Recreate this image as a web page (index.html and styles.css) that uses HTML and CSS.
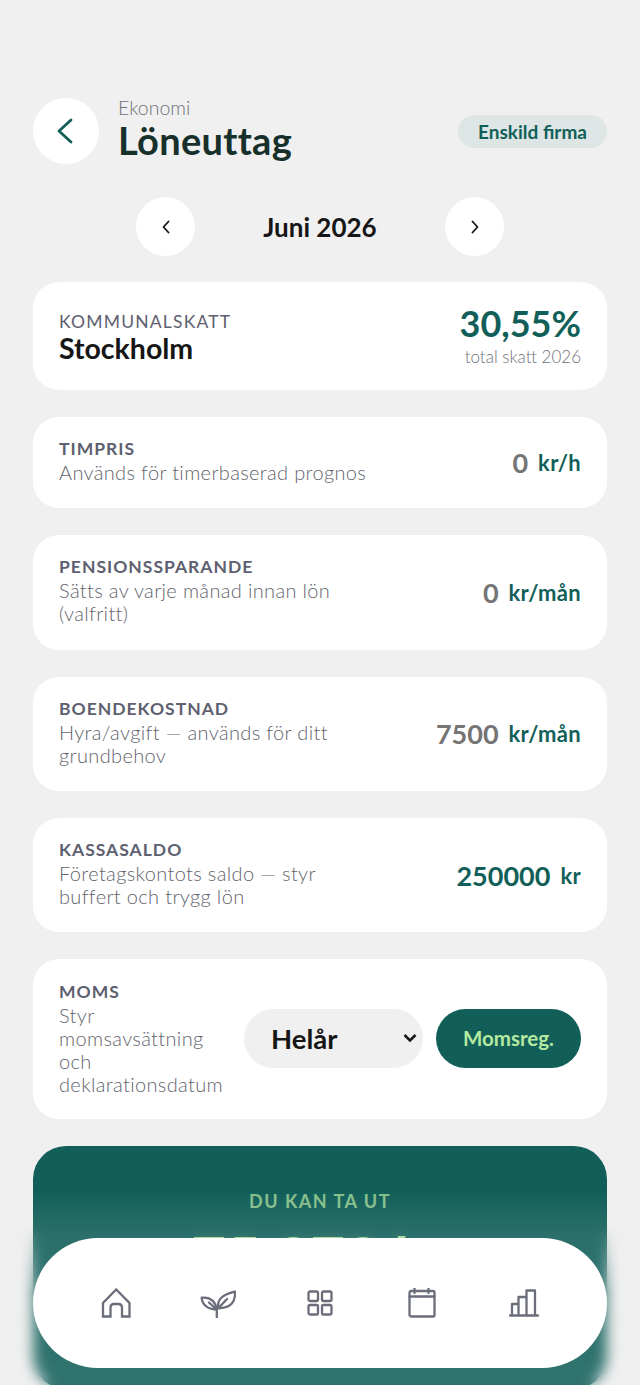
FILE: index.html
```html
<!DOCTYPE html>
<html lang="sv">
<head>
    <meta charset="UTF-8">
    <meta name="viewport" content="width=device-width, initial-scale=1.0">
    <title>Löneuttag</title>
    <link rel="stylesheet" href="styles.css">
</head>
<body>
    <div class="page">
        <header class="top">
            <button class="back" aria-label="Tillbaka">
                <svg width="18" height="26" viewBox="0 0 18 26"><path d="M15 2 L3 13 L15 24"/></svg>
            </button>
            <div class="titles">
                <div class="crumb">Ekonomi</div>
                <h1>Löneuttag</h1>
            </div>
            <span class="chip">Enskild firma</span>
        </header>

        <div class="month">
            <button class="month-btn" aria-label="Föregående"><svg width="10" height="14" viewBox="0 0 10 14"><path d="M7.500 1.500 L2.500 7 L7.500 12.500"/></svg></button>
            <span class="month-name">Juni 2026</span>
            <button class="month-btn" aria-label="Nästa"><svg width="10" height="14" viewBox="0 0 10 14"><path d="M2.500 1.500 L7.500 7 L2.500 12.500"/></svg></button>
        </div>

        <section class="card tax">
            <div>
                <div class="label">KOMMUNALSKATT</div>
                <div class="city">Stockholm</div>
            </div>
            <div class="tax-right">
                <div class="percent">30,55%</div>
                <div class="tax-note">total skatt 2026</div>
            </div>
        </section>

        <section class="card">
            <div class="info">
                <div class="label">TIMPRIS</div>
                <div class="desc">Används för timerbaserad prognos</div>
            </div>
            <div class="amount"><span class="num">0</span><span class="unit">kr/h</span></div>
        </section>

        <section class="card">
            <div class="info narrow">
                <div class="label">PENSIONSSPARANDE</div>
                <div class="desc">Sätts av varje månad innan lön (valfritt)</div>
            </div>
            <div class="amount"><span class="num">0</span><span class="unit">kr/mån</span></div>
        </section>

        <section class="card">
            <div class="info narrow">
                <div class="label">BOENDEKOSTNAD</div>
                <div class="desc">Hyra/avgift — används för ditt grundbehov</div>
            </div>
            <div class="amount"><span class="num">7500</span><span class="unit">kr/mån</span></div>
        </section>

        <section class="card">
            <div class="info narrow">
                <div class="label">KASSASALDO</div>
                <div class="desc">Företagskontots saldo — styr buffert och trygg lön</div>
            </div>
            <div class="amount"><span class="num green">250000</span><span class="unit">kr</span></div>
        </section>

        <section class="card moms">
            <div class="info">
                <div class="label">MOMS</div>
                <div class="desc">Styr momsavsättning och deklarationsdatum</div>
            </div>
            <select class="period">
                <option>Helår</option>
            </select>
            <button class="reg">Momsreg.</button>
        </section>

        <section class="hero">
            <div class="hero-label">DU KAN TA UT</div>
            <div class="hero-value">75 373 kr</div>
        </section>
    </div>

    <div class="nav-blur"></div>
    <div class="nav-tint"></div>
    <nav class="tabbar">
        <span class="tab">
            <svg class="miter" width="30" height="30" viewBox="0 0 30 30"><path d="M2 28.500 V15 L15.200 1.500 L28.500 15 V28.500 H21 V20 Q21 16 17.500 16 H13 Q9.500 16 9.500 20 V28.500 Z"/></svg>
        </span>
        <span class="tab">
            <svg width="36" height="30" viewBox="0 0 36 30"><path d="M16.800 29.300 V21 M18.300 20.300 C17 13 20 7 35 3.700 C35.500 14 31 20 18.300 20.300 Z M18.300 20.300 L27 11 M16 21.500 C16.500 15 11 8.500 1.700 9.700 C2 16 7 21 16 21.500 Z M9 14.500 L16 21"/></svg>
        </span>
        <span class="tab">
            <svg width="26" height="26" viewBox="0 0 26 26"><rect x="1.500" y="1.500" width="9.500" height="9.500" rx="1.500"/><rect x="15" y="1.500" width="9.500" height="9.500" rx="1.500"/><rect x="1.500" y="15" width="9.500" height="9.500" rx="1.500"/><rect x="15" y="15" width="9.500" height="9.500" rx="1.500"/></svg>
        </span>
        <span class="tab">
            <svg width="28" height="30" viewBox="0 0 28 30"><rect x="1.500" y="3" width="25" height="25.500" rx="1.500"/><path d="M1.500 8.500 H26.500 M6.500 .5 V5 M20.500 .5 V5"/></svg>
        </span>
        <span class="tab">
            <svg width="30" height="28" viewBox="0 0 30 28"><path d="M1 26.500 H29 M3 26.500 V15 H9.500 V26.500 M9.500 15 V8 H17.500 V26.500 M17.500 8 V1.500 H26 V26.500"/></svg>
        </span>
    </nav>
</body>
</html>
```

FILE: styles.css
```css
* {
    box-sizing: border-box;
}
html, body {
    margin: 0;
    height: 100%;
}
body {
    font-family: 'Lato', 'Open Sans', sans-serif;
    background-color: #f0f0f0;
    color: #161616;
    overflow: hidden;
}
button {
    border: none;
    font-family: inherit;
    padding: 0;
}
svg {
    fill: none;
    stroke-linecap: round;
    stroke-linejoin: round;
}
svg.miter {
    stroke-linejoin: miter;
}
.page {
    padding: 98px 33px 0;
}
.top {
    display: flex;
    align-items: center;
    height: 66px;
}
.back {
    width: 66px;
    height: 66px;
    border-radius: 50%;
    background: white;
    display: flex;
    align-items: center;
    justify-content: center;
    margin-right: 19px;
}
.back svg {
    stroke: #125f5a;
    stroke-width: 2.800;
    margin-right: 2px;
}
.titles {
    flex: 1;
    margin-bottom: 6px;
}
.crumb {
    font-size: 19.500px;
    line-height: 23px;
    color: #6f7078;
    font-weight: 300;
}
h1 {
    margin: 0;
    font-size: 38px;
    line-height: 42px;
    font-weight: 700;
    letter-spacing: .3px;
    color: #17302c;
}
.chip {
    background: #dde6e4;
    color: #125f5a;
    font-size: 19px;
    font-weight: 700;
    height: 33px;
    line-height: 33px;
    width: 149px;
    text-align: center;
    border-radius: 17px;
}
.month {
    display: flex;
    justify-content: center;
    align-items: center;
    margin-top: 33px;
}
.month-btn {
    width: 59px;
    height: 59px;
    border-radius: 50%;
    background: white;
    display: flex;
    align-items: center;
    justify-content: center;
}
.month-btn svg {
    stroke: #161616;
    stroke-width: 1.800;
}
.month-name {
    width: 250px;
    text-align: center;
    font-size: 26px;
    font-weight: 700;
}
.card {
    background: white;
    border-radius: 26px;
    padding: 20px 26px 24.300px;
    margin-top: 27px;
    display: flex;
    align-items: center;
    justify-content: space-between;
}
.tax {
    height: 108px;
    margin-top: 26px;
    padding: 20px 26px;
}
.label {
    font-size: 17.500px;
    line-height: 24px;
    font-weight: 700;
    letter-spacing: 1px;
    color: #5e606f;
}
.tax .label {
    font-weight: 400;
    letter-spacing: 1.200px;
    margin-top: 1.500px;
    margin-bottom: -1.500px;
}
.city {
    font-size: 28.500px;
    line-height: 32px;
    font-weight: 700;
}
.tax-right {
    text-align: right;
}
.percent {
    font-size: 36px;
    line-height: 38px;
    color: #125f5a;
    font-weight: 700;
}
.tax-note {
    margin-top: 4px;
    font-size: 17px;
    line-height: 22px;
    color: #6f7078;
    font-weight: 300;
}
.desc {
    font-size: 20px;
    line-height: 23px;
    letter-spacing: .35px;
    color: #62636c;
    font-weight: 300;
}
.info.narrow {
    width: 290px;
}
.amount {
    display: flex;
    align-items: center;
    gap: 10px;
    margin-top: 4.300px;
}
.num {
    font-size: 27px;
    font-weight: 700;
    color: #757575;
}
.num.green {
    color: #125f5a;
}
.unit {
    font-size: 22px;
    font-weight: 700;
    letter-spacing: .3px;
    color: #125f5a;
}
.moms {
    gap: 13px;
    padding-top: 21px;
    padding-bottom: 23.300px;
}
.moms .info {
    flex: 1;
    min-width: 0;
}
.period {
    flex: none;
    width: 179px;
    height: 59px;
    border: none;
    border-radius: 30px;
    appearance: none;
    background-color: #f0f0f0;
    background-image: url("data:image/svg+xml,%3Csvg xmlns='http://www.w3.org/2000/svg' width='14' height='10' viewBox='0 0 14 10'%3E%3Cpath d='M1.500 2 L7 7.500 L12.500 2' fill='none' stroke='%23161616' stroke-width='2.500'/%3E%3C/svg%3E");
    background-repeat: no-repeat;
    background-position: right 6px center;
    color: #161616;
    font-family: inherit;
    font-size: 27.500px;
    font-weight: 700;
    padding: 0 0 0 27px;
}
.reg {
    flex: none;
    width: 145px;
    height: 59px;
    border-radius: 30px;
    background: #125f5a;
    color: #b5e99f;
    font-size: 20.500px;
    font-weight: 700;
}
.hero {
    background: #125f5a;
    border-radius: 33px;
    margin-top: 27px;
    height: 243px;
    padding-top: 43px;
    text-align: center;
}
.hero-label {
    font-size: 18px;
    line-height: 24px;
    font-weight: 700;
    letter-spacing: 1.500px;
    color: #86bf8a;
}
.hero-value {
    margin-top: 9px;
    font-size: 60px;
    line-height: 70px;
    font-weight: 700;
    color: #b5e99f;
}
/* progressive blur + milky tint behind the floating tab bar */
.nav-blur {
    position: fixed;
    left: 0;
    right: 0;
    top: 1225px;
    bottom: 0;
    backdrop-filter: blur(7px);
    -webkit-mask-image: linear-gradient(transparent, black 70px);
    mask-image: linear-gradient(transparent, black 70px);
}
.nav-tint {
    position: fixed;
    left: 0;
    right: 0;
    top: 1190px;
    bottom: 0;
    background: linear-gradient(rgba(240,240,240,0), rgba(240,240,240,.12) 48px, rgba(240,240,240,.14));
}
.tabbar {
    position: fixed;
    left: 33px;
    top: 1238px;
    width: 574px;
    height: 130px;
    border-radius: 65px;
    background: white;
    display: grid;
    grid-template-columns: repeat(5, 1fr);
    align-items: center;
    padding: 0 32px;
}
.tab {
    display: flex;
    justify-content: center;
}
.tabbar svg {
    stroke: #6b6d7a;
    stroke-width: 2.300;
}
```
